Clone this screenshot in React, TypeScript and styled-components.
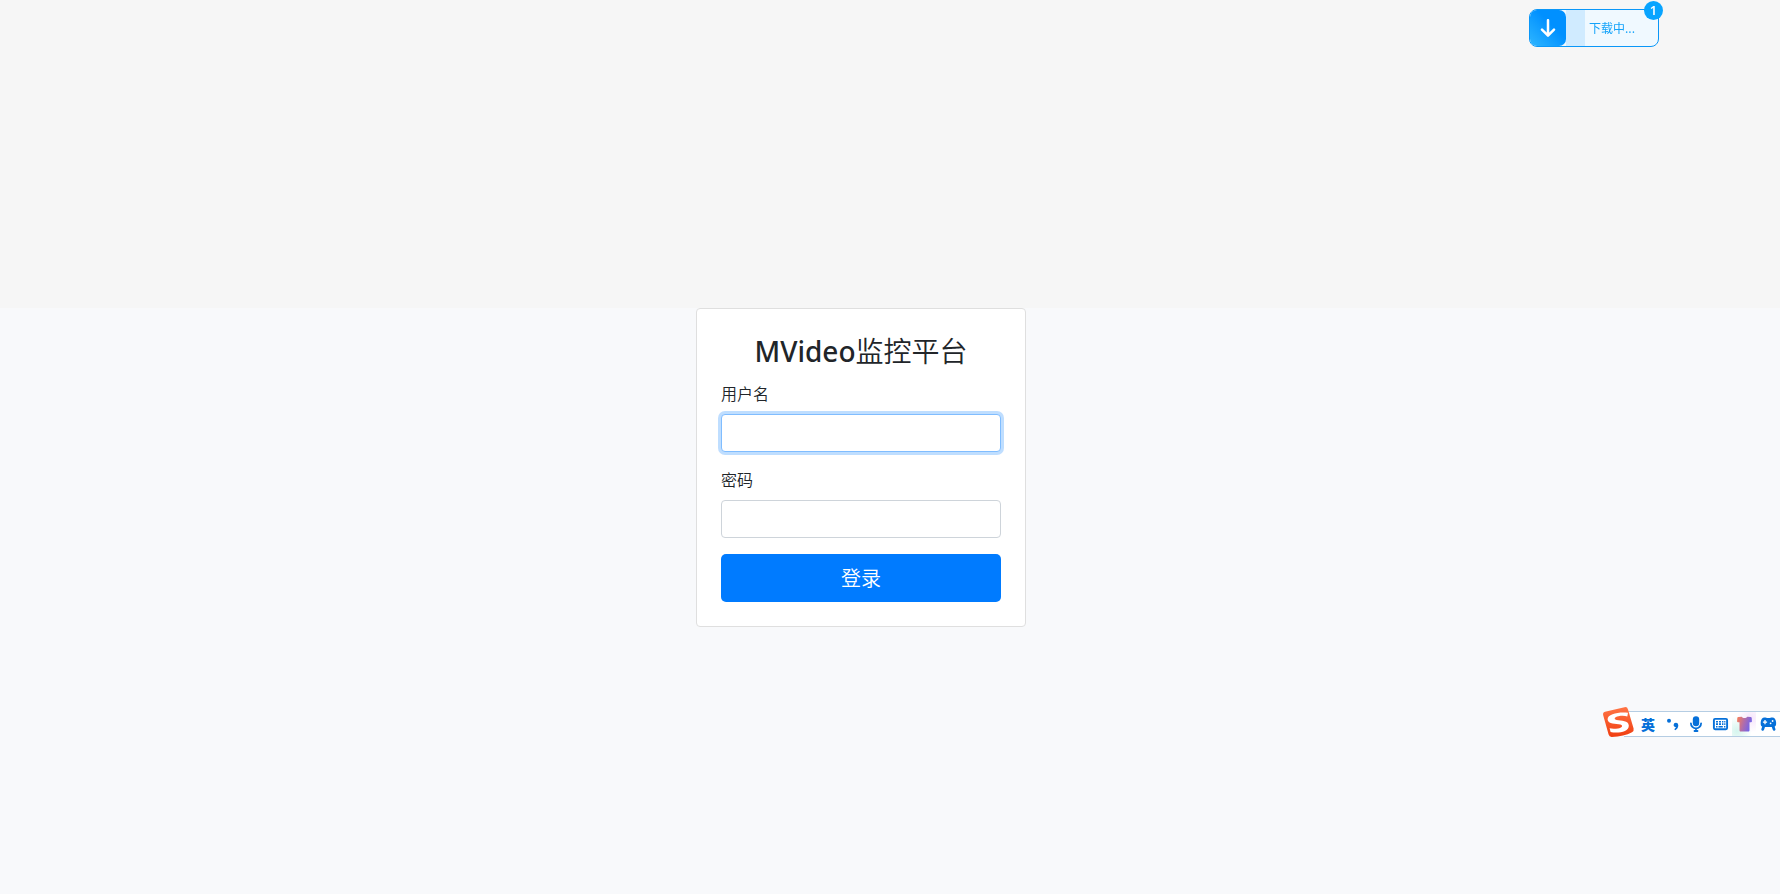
import React from "react";
import styled, { createGlobalStyle, css } from "styled-components";

const GlobalStyle = createGlobalStyle`
  *, *::before, *::after { box-sizing: border-box; }
  body {
    margin: 0;
    background: #f8f9fb;
    color: #212529;
    font-family: "Open Sans", "Noto Sans CJK SC", sans-serif;
    font-size: 16px;
    line-height: 24px;
  }
`;

const Page = styled.div`
  min-height: 100vh;
  display: flex;
  flex-direction: column;
`;

const TopBand = styled.div`
  height: 308px;
  background: #f6f6f6;
`;

const Main = styled.main`
  display: flex;
  justify-content: center;
  padding-right: 58px;
`;

const Card = styled.form`
  width: 100%;
  max-width: 330px;
  padding: 24px;
  background: #fff;
  border: 1px solid #dfdfdf;
  border-radius: 4px;
  display: flex;
  flex-direction: column;
  gap: 16px;
`;

const Title = styled.h1`
  margin: 0;
  height: 33px;
  padding-top: 2px;
  font-family: "Noto Sans CJK SC", sans-serif;
  font-size: 28px;
  line-height: 30px;
  font-weight: 350;
  text-align: center;
`;

const Brand = styled.span`
  font-family: "Noto Sans", sans-serif;
  font-weight: 500;
`;

const Field = styled.div`
  display: flex;
  flex-direction: column;
  gap: 8px;
`;

const Label = styled.label`
  align-self: flex-start;
  font-weight: 350;
`;

const Input = styled.input`
  width: 100%;
  height: 38px;
  padding: 6px 12px;
  font: inherit;
  color: #495057;
  background: #fff;
  border: 1px solid #ced4da;
  border-radius: 4px;
  outline: 0;
  caret-color: transparent;

  &:focus {
    border-color: #80bdff;
    box-shadow: 0 0 0 3px rgba(0, 123, 255, 0.25);
  }
`;

const SubmitButton = styled.button`
  width: 100%;
  height: 48px;
  padding: 2px 0 0;
  border: 0;
  border-radius: 5px;
  background: #007bff;
  color: #fff;
  font: inherit;
  font-size: 20px;
  line-height: 30px;
  font-weight: 350;
  cursor: pointer;
`;

const Download = styled.div`
  position: fixed;
  top: 9px;
  right: 121px;
  width: 130px;
  height: 38px;
  display: flex;
  align-items: stretch;
  border: 1px solid #0a97f8;
  border-radius: 8px;
  background: #f0f9ff;
`;

const DownloadButton = styled.button`
  width: 36px;
  padding: 0;
  border: 0;
  border-radius: 7px;
  background: linear-gradient(45deg, #2fb6ff 0%, #0090ff 60%, #0090ff 100%);
  display: flex;
  align-items: center;
  justify-content: center;
`;

const Progress = styled.div`
  width: 19px;
  background: #d0ebff;
`;

const DownloadText = styled.span`
  padding-left: 4px;
  font-family: "Noto Sans CJK SC", sans-serif;
  font-size: 12px;
  line-height: 36px;
  color: #14a3fa;
`;

const Badge = styled.span`
  position: absolute;
  top: -9px;
  right: -5px;
  width: 19px;
  height: 19px;
  border-radius: 50%;
  background: #08a4ff;
  color: #fff;
  font-size: 13px;
  line-height: 19px;
  font-weight: 600;
  text-align: center;
`;

const ImeBar = styled.div`
  position: fixed;
  right: 0;
  bottom: 157px;
  height: 26px;
  padding-left: 12px;
  display: flex;
  align-items: stretch;
  background: #fff;
  border: solid #b5cde3;
  border-width: 1px 0;
`;

const ImeLogo = styled.div`
  position: absolute;
  left: -22px;
  top: -6px;
  width: 34px;
  height: 34px;
`;

const ImeButton = styled.button<{ $glow?: boolean }>`
  width: 24px;
  padding: 0;
  border: 0;
  background: none;
  color: #0670d9;
  font-family: "Noto Sans CJK SC", sans-serif;
  font-size: 14px;
  line-height: 24px;
  font-weight: 900;
  display: flex;
  align-items: center;
  justify-content: center;
  ${(p) =>
    p.$glow &&
    css`
      background: radial-gradient(circle at 20% 80%, #d5f5ee 0%, transparent 55%),
        radial-gradient(circle at 80% 25%, #f6e6fb 0%, transparent 55%);
    `}
`;

const Icon = ({ children }: { children: React.ReactNode }) => (
  <svg width="18" height="18" viewBox="0 0 18 18" fill="none" aria-hidden="true">
    {children}
  </svg>
);

export default function App() {
  return (
    <Page>
      <GlobalStyle />
      <TopBand />
      <Main>
        <Card onSubmit={(e) => e.preventDefault()}>
          <Title>
            <Brand>MVideo</Brand>监控平台
          </Title>
          <Field>
            <Label htmlFor="username">用户名</Label>
            <Input id="username" name="username" type="text" autoFocus />
          </Field>
          <Field>
            <Label htmlFor="password">密码</Label>
            <Input id="password" name="password" type="password" />
          </Field>
          <SubmitButton type="submit">登录</SubmitButton>
        </Card>
      </Main>

      <Download>
        <DownloadButton type="button" aria-label="下载">
          <Icon>
            <path
              d="M9 1.200v15M3 10.600l6 6 6-6"
              stroke="#fff"
              strokeWidth="2.500"
              strokeLinecap="round"
              strokeLinejoin="round"
            />
          </Icon>
        </DownloadButton>
        <Progress />
        <DownloadText>下载中...</DownloadText>
        <Badge>1</Badge>
      </Download>

      <ImeBar>
        <ImeLogo>
          <svg width="34" height="34" viewBox="0 0 34 34" aria-hidden="true">
            <defs>
              <linearGradient id="logoFill" x1="0" y1="0" x2="0" y2="1">
                <stop offset="0" stopColor="#ff7445" />
                <stop offset="1" stopColor="#f03e10" />
              </linearGradient>
            </defs>
            <path
              d="M3 5.800 L22.500 1.200 Q25.300 .7 26 3.400 L31.600 22.500 Q32.200 25 30 26.200 Q22 30.600 9.800 30.900 Q7.300 31 6.600 28.500 L1.200 9.300 Q.5 6.600 3 5.800Z"
              fill="url(#logoFill)"
            />
            <path
              d="M26 6.800C18 5.600 5.400 7.600 5.600 13.400C6 18.400 14 17.200 18.500 18.400C21.500 19.400 20 21.800 16 22.400C13 22.900 10 22.900 7.600 22.300L8.600 26C16 27.600 27.200 25.800 26.800 19.400C26.400 14.200 19.500 14.800 14.500 13.900C11.500 13.200 12.500 10.800 16.500 10.200C20 9.600 23 9.800 25.300 10.400Z"
              fill="#fff"
            />
          </svg>
        </ImeLogo>
        <ImeButton type="button">英</ImeButton>
        <ImeButton type="button" aria-label="标点">
          <Icon>
            <circle cx="6" cy="5.700" r="2" fill="currentColor" />
            <path
              d="M10.600 9.900a2.300 2.300 0 0 1 4.700.3c0 2.200-1.100 3.900-3 5l-1-1c1-.7 1.500-1.300 1.600-2.100-1.300 0-2.200-.9-2.300-2.200Z"
              fill="currentColor"
            />
          </Icon>
        </ImeButton>
        <ImeButton type="button" aria-label="语音">
          <Icon>
            <rect x="5.800" y="1.300" width="6.400" height="10" rx="3.200" fill="currentColor" />
            <path
              d="M3.900 8.300a5.100 5.100 0 0 0 10.200 0M9 13.500v2.500M7.500 16h3"
              stroke="currentColor"
              strokeWidth="1.800"
              strokeLinecap="round"
            />
          </Icon>
        </ImeButton>
        <ImeButton type="button" aria-label="键盘">
          <Icon>
            <rect x="2.900" y="3.900" width="13.200" height="10.400" rx="1.200" stroke="currentColor" strokeWidth="1.900" />
            <path
              d="M5 6.700h2M8 6.700h2M11 6.700h1.400M13.200 6.700h1.200M5 9.100h2M8 9.100h2M11 9.100h1.400M13.200 9.100h1.200M5 11.700h1.500M7.500 11.700h4.300M13 11.700h1.400"
              stroke="currentColor"
              strokeWidth="1.600"
            />
          </Icon>
        </ImeButton>
        <ImeButton type="button" aria-label="皮肤" $glow>
          <Icon>
            <defs>
              <linearGradient id="shirtFill" x1="0" y1="0.200" x2="1" y2="0.500">
                <stop offset="0" stopColor="#f57d5c" />
                <stop offset="0.500" stopColor="#ad6cae" />
                <stop offset="1" stopColor="#6b63f0" />
              </linearGradient>
            </defs>
            <path
              d="M3.400 2 6.700 1.800C7.700 3.500 11.300 3.500 12.300 1.800l3.300.2c.7.1 1 .5 1.100 1.100l.2 3.200c0 .6-.3 1-.9 1h-1.500v8c0 .8-.4 1.200-1.200 1.200H5.700c-.8 0-1.200-.4-1.200-1.200v-8H3c-.6 0-.9-.4-.9-1l.2-3.200c.1-.6.4-1 1.100-1.100Z"
              fill="url(#shirtFill)"
            />
          </Icon>
        </ImeButton>
        <ImeButton type="button" aria-label="游戏">
          <Icon>
            <path
              d="M5.500 2.600c1.400 0 1.900.5 3.900.5s2.500-.5 3.900-.5c2.200 0 3.500 1.600 3.800 4.700.3 3-.6 4.600-2.400 4.600H4.100c-1.800 0-2.700-1.600-2.400-4.600.3-3.100 1.600-4.700 3.800-4.700Z"
              fill="currentColor"
            />
            <path d="M6 5.100v4.200M3.900 7.200h4.200" stroke="#fff" strokeWidth="1.300" />
            <circle cx="11.600" cy="8.300" r=".9" fill="#fff" />
            <circle cx="13.600" cy="6" r=".9" fill="#fff" />
            <path
              d="M4.600 11.800 3.700 14.400M14.200 11.800l.9 2.600"
              stroke="currentColor"
              strokeWidth="2.800"
              strokeLinecap="round"
            />
          </Icon>
        </ImeButton>
      </ImeBar>
    </Page>
  );
}
